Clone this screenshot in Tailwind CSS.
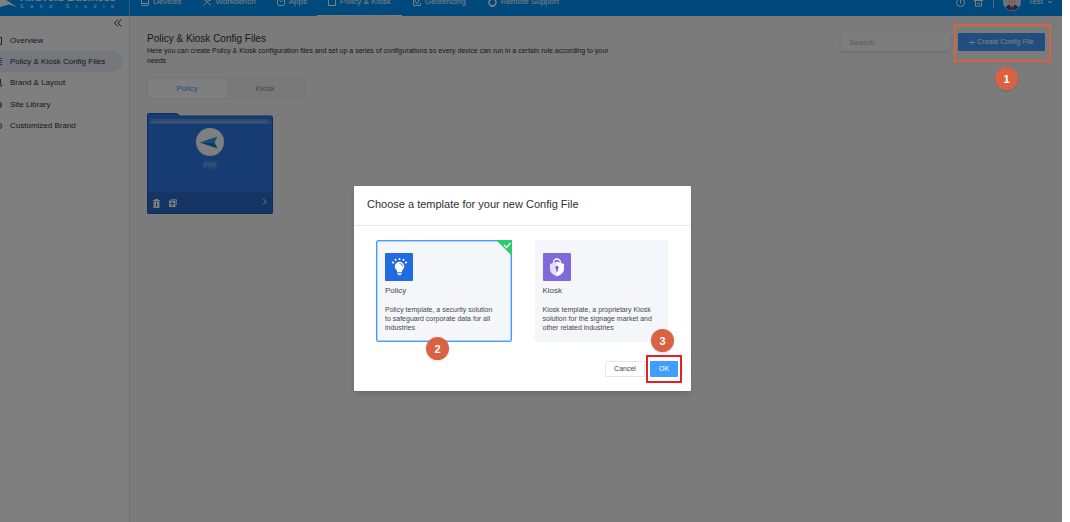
<!DOCTYPE html>
<html lang="en">
<head>
<meta charset="utf-8">
<title>Policy &amp; Kiosk Config Files</title>
<script src="https://cdn.jsdelivr.net/npm/@tailwindcss/browser@4"></script>
</head>
<body class="bg-white font-['Liberation_Sans',Arial,sans-serif] text-[8px] leading-[10px] text-[#303133]">
<div class="relative mr-2 flex min-h-screen flex-col bg-[#f6f6f6]">

  <header class="flex h-4 items-end overflow-hidden bg-[#0093fa] text-white">
    <div class="flex h-7 w-[129px] shrink-0 items-center">
      <svg class="h-7 w-[18px] shrink-0" viewBox="0 0 18 28" fill="#fff"><path d="M0 8 17 19 9 16.500 0 19z"/></svg>
      <div class="ml-[2px] w-[94px] pb-1 whitespace-nowrap">
        <div class="text-[11px] leading-[11px] font-bold">AirDroid Business</div>
        <div class="flex justify-between text-[5px] leading-[6px]"><span>S</span><span>a</span><span>n</span><span>d</span><span></span><span>S</span><span>t</span><span>u</span><span>d</span><span>i</span><span>o</span></div>
      </div>
    </div>
    <nav class="flex h-7 border-l border-white/40 text-[8px]">
      <a href="#" class="flex items-center gap-1 px-[11px]"><svg class="size-2" viewBox="0 0 8 8" fill="none" stroke="#fff"><rect x=".5" y="-.5" width="7" height="8" rx="1"/><path d="M1 5.500h6"/></svg>Devices</a>
      <a href="#" class="flex items-center gap-1 px-[11px]"><svg class="size-2" viewBox="0 0 8 8" fill="none" stroke="#fff"><path d="m.5 7.500 5-5M2 1l5.500 6.500M5 .5l1 2 2-.5M.5 1l2 2"/></svg>Workbench</a>
      <a href="#" class="flex items-center gap-1 px-[10px]"><svg class="size-2" viewBox="0 0 8 8" fill="none" stroke="#fff"><rect x=".5" y=".5" width="7" height="7" rx="1"/><path d="M2.500 2.500q1.500 2.500 3 0"/></svg>Apps</a>
      <a href="#" class="flex items-center gap-1 border-b border-white px-[11px] pt-px"><svg class="size-2" viewBox="0 0 8 8" fill="none" stroke="#fff"><path d="M.5.5h3l1 1h3v6h-7z"/></svg>Policy &amp; Kiosk</a>
      <a href="#" class="flex items-center gap-1 px-[11px]"><svg class="size-2" viewBox="0 0 8 8" fill="none" stroke="#fff"><path d="M2 .5H.5v7h7V5M4 6 2 3a2 2 0 1 1 4 0z"/></svg>Geofencing</a>
      <a href="#" class="flex items-center gap-1 px-[11px]"><svg class="size-[9px]" viewBox="0 0 9 9" fill="none" stroke="#fff"><circle cx="4.500" cy="4.500" r="3.500" stroke-width="1.500"/><path d="M3 8h3" stroke-width="2"/></svg>Remote Support</a>
    </nav>
    <div class="ml-auto flex h-7 items-center pr-[10px]">
      <button aria-label="Help"><svg class="size-[9px]" viewBox="0 0 9 9" fill="none" stroke="#fff"><circle cx="4.500" cy="4.500" r="4"/><path d="M4.500 2v3.500"/></svg></button>
      <button aria-label="Notifications" class="ml-[9px]"><svg class="size-[9px]" viewBox="0 0 9 9" fill="none" stroke="#fff"><path d="M0 2.500h9M1.500 3v5h6V3M3 5.500h3M4.500 0v2"/></svg></button>
      <span class="ml-[10px] h-[11px] w-px bg-white/70"></span>
      <svg class="ml-[9px] h-[18px] w-[18px]" viewBox="0 0 18 18"><circle cx="9" cy="9" r="9" fill="#dde6f2"/><path d="M2.500 14.500Q5 11 9 11t6.500 3.500A9 9 0 0 1 2.500 14.500" fill="#35508e"/><path d="m6.500 11 2.500 6 2.500-6z" fill="#fff"/><path d="m8.500 12-.5 4 1 2 1-2-.5-4z" fill="#d33"/><circle cx="9" cy="7.500" r="4" fill="#f3c7b4"/><path d="M5 6q4-5 8 0V3H5z" fill="#333"/></svg>
      <button class="ml-[7px] flex items-center gap-[5px]">Test <svg class="size-1" viewBox="0 0 4 4" fill="none" stroke="#fff"><path d="m0 1 2 2 2-2"/></svg></button>
    </div>
  </header>

  <div class="flex flex-1">
    <aside class="w-[130px] shrink-0 border-r border-[#dcdcdc] bg-white">
      <div class="flex h-[14px] items-center justify-end pr-[7px]">
        <button aria-label="Collapse sidebar"><svg class="h-2 w-2" viewBox="0 0 8 8" fill="none" stroke="#303133"><path d="M4 .5.500 4 4 7.500M7.500.500 4 4l3.500 3.500"/></svg></button>
      </div>
      <nav class="flex flex-col">
        <a href="#" class="mr-[6px] flex h-[21px] items-center gap-2"><svg class="h-2 w-[2px]" viewBox="0 0 2 8" fill="none" stroke="#444"><path d="M0 .5h1.500v7H0"/></svg>Overview</a>
        <a href="#" class="mr-[6px] flex h-[21px] items-center gap-2 rounded-r-full bg-[#eceff9]"><svg class="h-2 w-[2px]" viewBox="0 0 2 8" fill="none" stroke="#2f80e0"><path d="M0 .5h2M0 2.500h2M0 4.500h2M0 6.500h2"/></svg>Policy &amp; Kiosk Config Files</a>
        <a href="#" class="mr-[6px] flex h-[22px] items-center gap-2"><svg class="h-2 w-[2px]" viewBox="0 0 2 8" fill="none" stroke="#444"><path d="M.5 0v4"/><circle cx="0" cy="6" r="1.500"/></svg>Brand &amp; Layout</a>
        <a href="#" class="mr-[6px] flex h-[21px] items-center gap-2"><svg class="h-2 w-[2px]" viewBox="0 0 2 8" fill="none" stroke="#444"><circle cx="-1.500" cy="4" r="3"/><path d="M0 3v3"/></svg>Site Library</a>
        <a href="#" class="mr-[6px] flex h-[21px] items-center gap-2"><svg class="h-2 w-[2px]" viewBox="0 0 2 8" fill="none" stroke="#444"><circle cx="-1.500" cy="4" r="3"/></svg>Customized Brand</a>
      </nav>
    </aside>

    <main class="flex-1 pt-4 pr-[17px] pl-[17px]">
      <div class="flex items-start justify-between">
        <div class="w-[480px]">
          <h1 class="text-[10px] leading-[13px]">Policy &amp; Kiosk Config Files</h1>
          <p class="mt-px text-[7px] leading-[10px]">Here you can create Policy &amp; Kiosk configuration files and set up a series of configurations so every device can run in a certain rule according to your<br>needs</p>
        </div>
        <div class="mt-px flex gap-2">
          <input type="text" aria-label="Search" placeholder="Search" class="h-[18px] w-[109px] rounded-xs bg-[#fafafa] px-2 text-[8px] shadow-sm placeholder:text-[#b4b7bd]">
          <button class="flex h-[18px] w-[87px] items-center justify-center gap-[2px] rounded-[1px] bg-[#409eff] text-[7px] text-white"><svg class="size-[6px]" viewBox="0 0 6 6" stroke="#fff"><path d="M0 3.500h6"/><path d="M3 .5v5.500" stroke-width=".6"/></svg>Create Config File</button>
        </div>
      </div>

      <div class="mt-[12px] flex h-[21px] w-[158px] rounded-xs border border-[#ebebeb] text-[8px]">
        <button class="w-[78px] bg-white text-[#409eff]">Policy</button>
        <button class="flex-1 bg-[#f2f2f2] text-[#909399]">Kiosk</button>
      </div>

      <section class="relative mt-[14px] flex h-[101px] w-[126px] flex-col text-white">
        <svg class="absolute inset-0 size-full" viewBox="0 0 126 101">
          <path d="M1 .5h28.500l4 2.500H124q1.500 0 1.500 1.500v95q0 1-1 1H1.500q-1 0-1-1V1.500z" fill="#2e79e8" stroke="#1b59b4"/>
          <path d="M1 11 5 6h116l4 5z" fill="#5b93e4"/><path d="M6 8h114v2H6z" fill="#7ca8ea"/>
          <path d="M1 79h124v21H1z" fill="#2a6ac9"/>
        </svg>
        <div class="relative flex flex-1 flex-col items-center pt-[15px]">
          <svg class="size-7" viewBox="0 0 28 28"><circle cx="14" cy="14" r="14" fill="#fff"/><path d="m3.500 14.500 18-6-3 6z" fill="#1da4e6"/><path d="m3.500 14.500h15l3 6z" fill="#1273c8"/></svg>
          <span class="mt-1 text-[8px] leading-[8px] font-bold opacity-60 blur-[1px]">yyy</span>
        </div>
        <div class="relative flex h-[22px] items-center gap-[9px] px-[6px]">
          <button aria-label="Delete"><svg class="h-[9px] w-[7px]" viewBox="0 0 7 9"><path d="M0 1h2V0h3v1h2v1H0zM.5 2.500h6V9h-6z" fill="#fff"/><path d="M3.500 4v3.500" stroke="#2864bd"/></svg></button>
          <button aria-label="Duplicate"><svg class="size-2" viewBox="0 0 8 8"><path d="M2 .5h5.500V6" fill="none" stroke="#fff" stroke-dasharray="1 .5"/><path d="M0 1.500h6.500V8H0z" fill="#fff"/><path d="M3.200 2.500v4.500M1 4.700h4.500" stroke="#2864bd"/></svg></button>
          <button aria-label="Open" class="ml-auto pb-1"><svg class="h-[7px] w-[5px]" viewBox="0 0 5 7" fill="none" stroke="#fff"><path d="m1 .5 3 3-3 3"/></svg></button>
        </div>
      </section>
    </main>
  </div>

  <div class="absolute inset-0 bg-black/50 pt-[186px] pr-[17px]">
    <div role="dialog" aria-labelledby="dlg-title" class="relative mx-auto w-[337px] rounded-[1px] bg-white shadow-md">
      <h2 id="dlg-title" class="flex h-10 items-center border-b border-[#ebebeb] px-[13px] pb-[3px] text-[11px]">Choose a template for your new Config File</h2>
      <div class="flex gap-[23px] pr-[23px] pl-[22px] pt-[14px] text-[#44474c]">
        <button class="relative flex h-[102px] flex-1 flex-col items-start rounded-xs border border-[#409eff] bg-[#f4f6fa] px-2 pt-[12px] text-left ring-1 ring-[#409eff]/40 ring-inset">
          <svg class="absolute -top-px -right-px size-4" viewBox="0 0 16 16"><path d="M0 0h16v16z" fill="#2ecc71"/><path d="m8 5 2.500 2.500L14.500 3" fill="none" stroke="#fff" stroke-width="1.300"/></svg>
          <svg class="size-7" viewBox="0 0 28 28"><rect width="28" height="28" rx="1" fill="#206be0"/><circle cx="14.500" cy="13.500" r="4.700" fill="#fff"/><path d="M12 17h5v2h-5zM12 19.700h5v1h-5zM13 21.300h3v1h-3z" fill="#fff"/><path d="M14.500 5v2M10 6l1 1.600M19 6l-1 1.600M7 9l2 1M22 9l-2 1" stroke="#fff" stroke-width="1.600"/><path d="M14.500 10.500q3 0 3 3" fill="none" stroke="#206be0" stroke-width=".8"/></svg>
          <span class="mt-[5px] text-[8px] leading-[10px]">Policy</span>
          <span class="mt-[9px] text-[7px] leading-[9px]">Policy template, a security solution<br>to safeguard corporate data for all<br>industries</span>
        </button>
        <button class="flex h-[102px] flex-1 flex-col items-start rounded-xs bg-[#f4f6fa] px-2 pt-[13px] text-left">
          <svg class="size-7" viewBox="0 0 28 28"><rect width="28" height="28" rx="1" fill="#806adb"/><path d="M10.500 11V9.500a3.500 3.500 0 0 1 7 0V11" fill="none" stroke="#fff" stroke-width="1.300"/><path d="M14 8.500 7 11v5q0 5 7 7.500z" fill="#e4def8"/><path d="m14 8.500 7 2.500v5q0 5-7 7.500z" fill="#fff"/><circle cx="14" cy="14.500" r="1.500" fill="#6b52cf"/><path d="M13.300 15h1.500v3.500h-1.500z" fill="#6b52cf"/></svg>
          <span class="mt-[5px] text-[8px] leading-[10px]">Kiosk</span>
          <span class="mt-[9px] text-[7px] leading-[9px]">Kiosk template, a proprietary Kiosk<br>solution for the signage market and<br>other related industries</span>
        </button>
      </div>
      <div class="flex justify-end gap-[5px] px-[13px] pt-[19px] pb-[14px] text-[7px]">
        <button class="h-4 w-10 rounded-[1px] border border-[#e3e5ea] text-[#44474c]">Cancel</button>
        <button class="relative h-4 w-7 rounded-[1px] bg-[#409eff] text-white">OK<span class="absolute -inset-x-1 -top-[6px] -bottom-[6px] border-2 border-[#ea1c24]"></span></button>
      </div>
      <span class="absolute top-[151px] left-[72px] flex size-[23px] items-center justify-center rounded-full bg-[#d96244] text-[11px] font-bold text-white shadow-sm">2</span>
      <span class="absolute top-[143px] right-[17px] flex size-[23px] items-center justify-center rounded-full bg-[#d96244] text-[11px] font-bold text-white shadow-sm">3</span>
    </div>
    <span class="absolute top-6 right-[11px] h-[38px] w-[97px] border-2 border-[#d96244]"></span>
    <span class="absolute top-[67px] right-[44px] flex size-[23px] items-center justify-center rounded-full bg-[#d96244] text-[11px] font-bold text-white shadow-sm">1</span>
  </div>
</div>
</body>
</html>
